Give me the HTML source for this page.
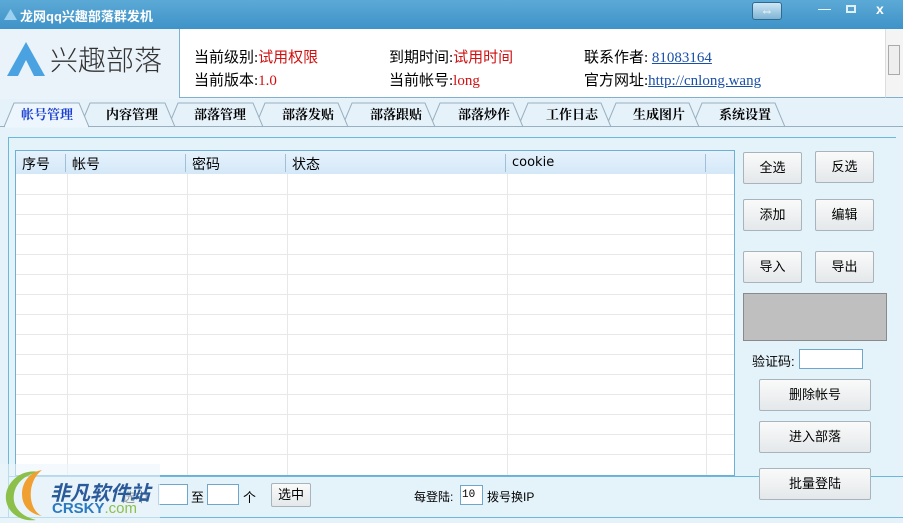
<!DOCTYPE html>
<html><head><meta charset="utf-8"><style>
*{margin:0;padding:0;box-sizing:border-box}
body{width:903px;height:523px;overflow:hidden;background:#e6f2fa;font-family:"Liberation Sans","Noto Sans CJK SC",sans-serif;position:relative;font-size:12px;color:#000}
.abs{position:absolute}
.title{left:0;top:0;width:903px;height:29px;background:linear-gradient(#5ba9d6,#3f93c8);}
.title span{position:absolute;left:20px;top:6px;color:#fff;font-weight:bold;font-size:13px}
.hdr{left:0;top:29px;width:903px;height:70px;background:#eaf3fa}
.wbox{left:179px;top:29px;width:706px;height:69px;background:#fff;border-left:1px solid #7fb0d0;border-bottom:1px solid #7fb0d0}
.sb{left:885px;top:29px;width:18px;height:69px;background:#f4f4f4;border-left:1px solid #ddd;border-bottom:1px solid #7fb0d0}
.info{font-size:15px;font-family:"Liberation Serif","Noto Sans CJK SC",sans-serif}
.red{color:#d01010}
.lnk{color:#1a4fa8;text-decoration:underline}
.tab{top:102px;height:25px;font-weight:bold;font-size:13px;text-align:center;line-height:25px;font-family:"Liberation Sans","Noto Serif CJK SC",sans-serif}
.panel{left:8px;top:137px;width:888px;height:381px;border:1px solid #6cb8da;border-right:none;background:#e4f2fa}
.table{left:15px;top:150px;width:720px;height:326px;background:#fff;border:1px solid #6cb0d6;overflow:hidden}
.btn{background:linear-gradient(#fafafa,#e4e8ea);border:1px solid #a8b4bc;border-radius:2px;text-align:center;font-size:13px}
.inp{background:#fff;border:1px solid #6ea6cc}
</style></head><body>
<div class="abs title"><svg style="position:absolute;left:4px;top:8px" width="13" height="12"><path d="M6.5 1L13 12H0Z" fill="#9cd0f0"/></svg><span>龙网qq兴趣部落群发机</span>
<div class="abs" style="left:752px;top:2px;width:30px;height:18px;border:1px solid #2e6a90;border-radius:3px;background:linear-gradient(#cfe6f4,#7fb4d4);color:#fff;text-align:center;font-size:13px;line-height:16px">⇔</div>
<div class="abs" style="left:818px;top:1px;color:#fff;font-size:13px">—</div>
<div class="abs" style="left:846px;top:5px;width:10px;height:8px;border:2px solid #e0f0fa"></div>
<div class="abs" style="left:876px;top:1px;color:#fff;font-weight:bold;font-size:14px">x</div>
</div>
<div class="abs hdr"></div>
<svg class="abs" style="left:6px;top:40px" width="40" height="38"><path d="M20 2L39 36H1Z" fill="#4aa3e0"/><path d="M20 20L28 36H12Z" fill="#eaf3fa"/></svg>
<div class="abs" style="left:50px;top:42px;font-size:28px;color:#333;font-family:'Noto Sans CJK SC',sans-serif;line-height:34px;font-weight:300">兴趣部落</div>
<div class="abs wbox"></div>
<div class="abs sb"><div class="abs" style="left:2px;top:16px;width:12px;height:30px;border:1px solid #aaa;background:#eee"></div></div>
<div class="abs info" style="left:194px;top:46px">当前级别:<span class="red">试用权限</span></div>
<div class="abs info" style="left:194px;top:69px">当前版本:<span class="red">1.0</span></div>
<div class="abs info" style="left:389px;top:46px">到期时间:<span class="red">试用时间</span></div>
<div class="abs info" style="left:389px;top:69px">当前帐号:<span class="red">long</span></div>
<div class="abs info" style="left:584px;top:46px">联系作者: <span class="lnk">81083164</span></div>
<div class="abs info" style="left:584px;top:69px">官方网址:<span class="lnk">http://cnlong.wang</span></div>
<svg class="abs" style="left:0;top:100px" width="903" height="30">
<g fill="#e6f2fa" stroke="#9ab0c0" stroke-width="1">
<path d="M785 27L775 3H702L692 27"/><path d="M699 27L689 3H616L606 27"/><path d="M611 27L601 3H528L518 27"/><path d="M523 27L513 3H440L430 27"/><path d="M435 27L425 3H352L342 27"/><path d="M348 27L338 3H265L255 27"/><path d="M263 27L253 3H178L168 27"/><path d="M175 27L165 3H90L80 27"/>
<path d="M89 27L79 3H14L4 27" fill="#edf6fc"/></g>
<line x1="0" y1="26.5" x2="903" y2="26.5" stroke="#9ab0c0"/><line x1="5" y1="26.5" x2="88" y2="26.5" stroke="#edf6fc" stroke-width="2"/></svg>
<div class="abs tab" style="left:14px;width:66px;color:#1a3fd0">帐号管理</div>
<div class="abs tab" style="left:97px;width:70px">内容管理</div>
<div class="abs tab" style="left:185px;width:70px">部落管理</div>
<div class="abs tab" style="left:273px;width:70px">部落发贴</div>
<div class="abs tab" style="left:361px;width:70px">部落跟贴</div>
<div class="abs tab" style="left:449px;width:70px">部落炒作</div>
<div class="abs tab" style="left:537px;width:70px">工作日志</div>
<div class="abs tab" style="left:624px;width:70px">生成图片</div>
<div class="abs tab" style="left:710px;width:70px">系统设置</div>
<div class="abs panel"></div>
<div class="abs table">
<svg width="720" height="326" style="position:absolute;left:0;top:0">
<defs><linearGradient id="g" x1="0" y1="0" x2="0" y2="1"><stop offset="0" stop-color="#e6f2fc"/><stop offset="1" stop-color="#d4e8f8"/></linearGradient></defs>
<rect x="0" y="0" width="720" height="23" fill="url(#g)"/>
<g stroke="#e8e8e8">
<line x1="0" y1="43.5" x2="720" y2="43.5"/><line x1="0" y1="63.5" x2="720" y2="63.5"/><line x1="0" y1="83.5" x2="720" y2="83.5"/><line x1="0" y1="103.5" x2="720" y2="103.5"/><line x1="0" y1="123.5" x2="720" y2="123.5"/><line x1="0" y1="143.5" x2="720" y2="143.5"/><line x1="0" y1="163.5" x2="720" y2="163.5"/><line x1="0" y1="183.5" x2="720" y2="183.5"/><line x1="0" y1="203.5" x2="720" y2="203.5"/><line x1="0" y1="223.5" x2="720" y2="223.5"/><line x1="0" y1="243.5" x2="720" y2="243.5"/><line x1="0" y1="263.5" x2="720" y2="263.5"/><line x1="0" y1="283.5" x2="720" y2="283.5"/><line x1="0" y1="303.5" x2="720" y2="303.5"/>
<line x1="51.5" y1="23" x2="51.5" y2="326"/><line x1="171.5" y1="23" x2="171.5" y2="326"/><line x1="271.5" y1="23" x2="271.5" y2="326"/><line x1="491.5" y1="23" x2="491.5" y2="326"/><line x1="690.5" y1="23" x2="690.5" y2="326"/></g>
<g stroke="#a0c0d8"><line x1="49.5" y1="3" x2="49.5" y2="21"/><line x1="169.5" y1="3" x2="169.5" y2="21"/><line x1="269.5" y1="3" x2="269.5" y2="21"/><line x1="489.5" y1="3" x2="489.5" y2="21"/><line x1="689.5" y1="3" x2="689.5" y2="21"/></g>
</svg>
<div class="abs" style="left:6px;top:3px;font-size:14px">序号</div>
<div class="abs" style="left:56px;top:3px;font-size:14px">帐号</div>
<div class="abs" style="left:176px;top:3px;font-size:14px">密码</div>
<div class="abs" style="left:276px;top:3px;font-size:14px">状态</div>
<div class="abs" style="left:496px;top:4px;font-family:'DejaVu Sans',sans-serif;font-size:13px">cookie</div>
</div>
<div class="abs" style="left:8px;top:476px;width:895px;height:1px;background:#6cb8da"></div>
<div class="abs btn" style="left:743px;top:152px;width:59px;height:32px;line-height:30px">全选</div>
<div class="abs btn" style="left:815px;top:151px;width:59px;height:32px;line-height:30px">反选</div>
<div class="abs btn" style="left:743px;top:199px;width:59px;height:32px;line-height:30px">添加</div>
<div class="abs btn" style="left:815px;top:199px;width:59px;height:32px;line-height:30px">编辑</div>
<div class="abs btn" style="left:743px;top:251px;width:59px;height:32px;line-height:30px">导入</div>
<div class="abs btn" style="left:815px;top:251px;width:59px;height:32px;line-height:30px">导出</div>
<div class="abs" style="left:743px;top:293px;width:144px;height:48px;background:#bfbfbf;border:1px solid #8a8a8a"></div>
<div class="abs" style="left:752px;top:351px;font-size:13px">验证码:</div>
<div class="abs inp" style="left:799px;top:349px;width:64px;height:20px"></div>
<div class="abs btn" style="left:759px;top:379px;width:112px;height:32px;line-height:30px">删除帐号</div>
<div class="abs btn" style="left:759px;top:421px;width:112px;height:32px;line-height:30px">进入部落</div>
<div class="abs btn" style="left:759px;top:468px;width:112px;height:32px;line-height:30px">批量登陆</div>
<div class="abs" style="left:122px;top:487px;font-size:13px">选中</div>
<div class="abs inp" style="left:158px;top:484px;width:30px;height:21px"></div>
<div class="abs" style="left:191px;top:487px;font-size:13px">至</div>
<div class="abs inp" style="left:207px;top:484px;width:32px;height:21px"></div>
<div class="abs" style="left:243px;top:487px;font-size:13px">个</div>
<div class="abs btn" style="left:271px;top:483px;width:40px;height:24px;line-height:22px">选中</div>
<div class="abs" style="left:414px;top:488px;font-size:12px">每登陆:</div>
<div class="abs inp" style="left:460px;top:485px;width:23px;height:20px;font-size:11px;padding-left:1px;line-height:18px;font-family:'Liberation Mono',monospace">10</div>
<div class="abs" style="left:487px;top:488px;font-size:12px">拨号换IP</div>
<div class="abs" style="left:0;top:517px;width:903px;height:1px;background:#6cb8da"></div>
<div class="abs" style="left:0;top:464px;width:160px;height:59px;background:rgba(235,245,250,0.6)"></div>
<svg class="abs" style="left:0;top:466px" width="50" height="57"><path d="M40 6C20 2 4 18 6 34C8 48 22 56 36 54C20 50 12 40 14 28C16 16 26 8 40 6Z" fill="#8cc04a"/><path d="M42 4C30 6 22 16 22 28C22 40 30 48 42 50C28 44 26 16 42 4Z" fill="#f0a030"/></svg>
<div class="abs" style="left:50px;top:477px;font-size:20px;font-weight:bold;font-style:italic;color:#2a5a9a">非凡软件站</div>
<div class="abs" style="left:52px;top:500px;font-size:15px;font-weight:bold;color:#2a7ac0">CRSKY<span style="color:#8cc04a;font-weight:normal">.com</span></div>
</body></html>
